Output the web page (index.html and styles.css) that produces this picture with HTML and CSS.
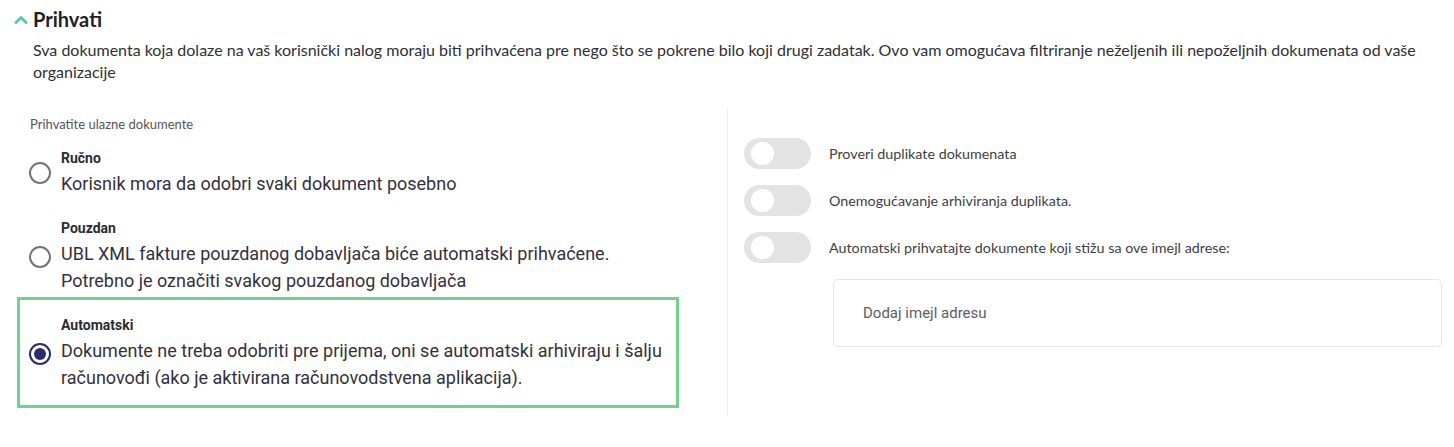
FILE: index.html
```html
<!DOCTYPE html>
<html lang="sr">
<head>
<meta charset="utf-8">
<title>Prihvati</title>
<link rel="stylesheet" href="styles.css">
</head>
<body>
<section class="panel">
  <header class="panel-head">
    <svg class="chevron" width="14" height="9" viewBox="0 0 14 9" aria-hidden="true">
      <path d="M2 7.5 L7 2.5 L12 7.5" fill="none" stroke="#5fc2b6" stroke-width="3" stroke-linecap="round" stroke-linejoin="round"/>
    </svg>
    <h2 class="panel-title">Prihvati</h2>
  </header>
  <p class="panel-desc">Sva dokumenta koja dolaze na vaš korisnički nalog moraju biti prihvaćena pre nego što se pokrene bilo koji drugi zadatak. Ovo vam omogućava filtriranje neželjenih ili nepoželjnih dokumenata od vaše organizacije</p>

  <div class="panel-body">
    <div class="col-left">
      <div class="group-label">Prihvatite ulazne dokumente</div>
      <div class="options">
        <div class="option">
          <span class="radio"></span>
          <div class="option-text">
            <div class="option-title">Ručno</div>
            <div class="option-desc">Korisnik mora da odobri svaki dokument posebno</div>
          </div>
        </div>
        <div class="option">
          <span class="radio"></span>
          <div class="option-text">
            <div class="option-title">Pouzdan</div>
            <div class="option-desc">UBL XML fakture pouzdanog dobavljača biće automatski prihvaćene.<br>Potrebno je označiti svakog pouzdanog dobavljača</div>
          </div>
        </div>
        <div class="option option-selected">
          <span class="radio radio-checked"></span>
          <div class="option-text">
            <div class="option-title">Automatski</div>
            <div class="option-desc">Dokumente ne treba odobriti pre prijema, oni se automatski arhiviraju i šalju računovođi (ako je aktivirana računovodstvena aplikacija).</div>
          </div>
        </div>
      </div>
    </div>

    <div class="col-right">
      <div class="switch-row">
        <span class="toggle"></span>
        <span class="switch-label">Proveri duplikate dokumenata</span>
      </div>
      <div class="switch-row">
        <span class="toggle"></span>
        <span class="switch-label">Onemogućavanje arhiviranja duplikata.</span>
      </div>
      <div class="switch-row">
        <span class="toggle"></span>
        <span class="switch-label">Automatski prihvatajte dokumente koji stižu sa ove imejl adrese:</span>
      </div>
      <div class="email-input">Dodaj imejl adresu</div>
    </div>
  </div>
</section>
</body>
</html>
```

FILE: styles.css
```css
* {
  box-sizing: border-box;
}

html, body {
  margin: 0;
  padding: 0;
  background: #ffffff;
}

body {
  font-family: Lato, "Open Sans", sans-serif;
  color: #333;
  width: 1454px;
  height: 447px;
  overflow: hidden;
}

.panel {
  padding: 7px 12px 0 0;
}

.panel-head {
  display: flex;
  align-items: center;
  gap: 5px;
  padding-left: 14px;
  height: 24px;
}

.chevron {
  display: block;
  flex: none;
}

.panel-title {
  margin: 0;
  font-family: Lato, sans-serif;
  font-weight: 700;
  font-size: 20px;
  line-height: 24px;
  color: #1f1f24;
}

.panel-desc {
  margin: 8px 0 0 0;
  padding-left: 33px;
  padding-right: 10px;
  font-family: Lato, sans-serif;
  font-size: 16px;
  line-height: 22px;
  color: #2f2f36;
}

.panel-body {
  display: flex;
  margin-top: 25px;
  margin-left: 17px;
}

.col-left {
  width: 711px;
  flex: none;
  border-right: 1px solid #efefef;
  padding: 8px 0 16px 8px;
}

.group-label {
  font-family: Lato, sans-serif;
  font-size: 13px;
  line-height: 16px;
  color: #555;
  padding-left: 5px;
}

.options {
  display: flex;
  flex-direction: column;
  gap: 2px;
  margin-top: 6px;
  width: 646px;
}

.option {
  display: flex;
  align-items: center;
  gap: 10px;
  padding: 11px 4px 9px 4px;
}

.option-selected {
  outline: 3px solid #74d08f;
  outline-offset: 5px;
}

.radio {
  flex: none;
  width: 22px;
  height: 22px;
  border: 2px solid #737373;
  border-radius: 50%;
  display: flex;
  align-items: center;
  justify-content: center;
}

.radio-checked {
  border-color: #2e2a6b;
}

.radio-checked::after {
  content: "";
  width: 12px;
  height: 12px;
  border-radius: 50%;
  background: #2e2a6b;
}

.option-text {
  font-family: Roboto, sans-serif;
}

.option-title {
  font-weight: 700;
  font-size: 14px;
  line-height: 18px;
  color: #2b2b33;
}

.option-desc {
  margin-top: 3px;
  font-size: 18px;
  line-height: 27px;
  color: #33313d;
}

.col-right {
  flex: 1;
  padding: 30px 0 0 16px;
}

.switch-row {
  display: flex;
  align-items: center;
  gap: 18px;
  height: 31px;
  margin-bottom: 16px;
}

.toggle {
  position: relative;
  flex: none;
  width: 67px;
  height: 31px;
  border-radius: 16px;
  background: #e3e3e3;
}

.toggle::after {
  content: "";
  position: absolute;
  left: 7px;
  top: 4px;
  width: 23px;
  height: 23px;
  border-radius: 50%;
  background: #ffffff;
}

.switch-label {
  font-family: Lato, sans-serif;
  font-size: 14.3px;
  color: #3e3e46;
}

.email-input {
  margin-left: 89px;
  height: 68px;
  border: 1px solid #e6e6e6;
  border-radius: 5px;
  display: flex;
  align-items: center;
  padding-left: 29px;
  font-family: Roboto, sans-serif;
  font-size: 15px;
  color: #5d5d66;
}
```
